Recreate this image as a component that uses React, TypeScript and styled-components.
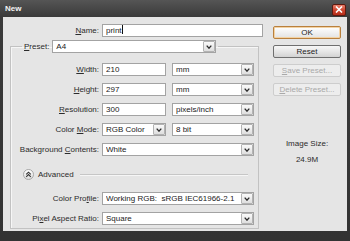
import React from "react";
import styled, { createGlobalStyle } from "styled-components";

const Global = createGlobalStyle`
  html, body { margin: 0; padding: 0; background: #333; }
  body { font-family: "Liberation Sans", Arial, sans-serif; font-size: 8px; color: #2b2b2b; }
  * { box-sizing: border-box; }
  u { text-decoration-thickness: 1px; text-underline-offset: 1px; }
`;

const Window = styled.div`
  width: 350px;
  height: 241px;
  display: flex;
  flex-direction: column;
  background: linear-gradient(#555 0px, #3a3a3a 17px, #333 100%);
`;

const TitleBar = styled.div`
  height: 17px;
  flex: none;
  display: flex;
  align-items: center;
  justify-content: space-between;
  padding: 0 4px 0 5px;
`;

const Title = styled.span`
  color: #f4f4f4;
  font-weight: bold;
  font-size: 8px;
`;

const CloseBtn = styled.div`
  width: 14px;
  height: 12px;
  margin-top: 2px;
  border-radius: 2px;
  border: 1px solid #5e1a10;
  background: linear-gradient(#e8806b, #cf4630 50%, #b52c19);
  display: flex;
  align-items: center;
  justify-content: center;
`;

const Body = styled.div`
  flex: 1;
  margin: 0 3px 10px 3px;
  background: #e5e5e5;
  display: flex;
  padding: 7px 0 2px 0;
`;

const LeftCol = styled.div`
  width: 260px;
  display: flex;
  flex-direction: column;
`;

const NameRow = styled.div`
  display: grid;
  grid-template-columns: 96px 161px;
  column-gap: 3px;
  align-items: center;
`;

const Label = styled.span`
  text-align: right;
  white-space: nowrap;
`;

const Group = styled.fieldset`
  margin: 3px 0 0 7px;
  padding: 0 4px 2px 0;
  width: 249px;
  flex: 1;
  min-width: 0;
  border: 1px solid #c2c2c2;
  box-shadow: inset 1px 1px 0 #f6f6f6;
`;

const Legend = styled.legend`
  margin-left: 11px;
  padding: 0 2px;
`;

const LegendInner = styled.div`
  display: flex;
  align-items: center;
  gap: 3px;
`;

const Grid = styled.div`
  display: grid;
  grid-template-columns: 88px 152px;
  column-gap: 3px;
  row-gap: 7px;
  align-items: center;
  padding-top: 10px;
`;

const Pair = styled.div`
  display: flex;
  gap: 6px;
`;

const Field = styled.div<{ $w: number }>`
  width: ${(p) => p.$w}px;
  height: 13px;
  background: #fff;
  border: 1px solid #a3a3a3;
  display: flex;
  align-items: center;
  padding-left: 3px;
  white-space: nowrap;
  color: #222;
`;

const FieldText = styled.span`
  flex: 1;
  overflow: hidden;
  line-height: 11px;
`;

const Caret = styled.span`
  display: inline-block;
  width: 1px;
  height: 9px;
  background: #111;
  vertical-align: -1px;
`;

const ArrowBtn = styled.span`
  width: 12px;
  height: 11px;
  flex: none;
  border: 1px solid #b3b3b3;
  border-radius: 1px;
  background: linear-gradient(#fafafa, #dedede);
  display: flex;
  align-items: center;
  justify-content: center;
`;

const AdvancedRow = styled.div`
  grid-column: 1 / -1;
  height: 22px;
  display: flex;
  align-items: center;
  padding-left: 12px;
  padding-right: 6px;
  gap: 4px;
`;

const RoundBtn = styled.span`
  width: 11px;
  height: 11px;
  border-radius: 50%;
  border: 1px solid #a8a8a8;
  background: linear-gradient(#ffffff, #dcdcdc);
  display: flex;
  align-items: center;
  justify-content: center;
`;

const Rule = styled.span`
  flex: 1;
  height: 1px;
  margin-left: 2px;
  background: #c6c6c6;
  box-shadow: 0 1px 0 #f6f6f6;
`;

const RightCol = styled.div`
  width: 68px;
  margin-left: 10px;
  padding-top: 2px;
  display: flex;
  flex-direction: column;
  gap: 6px;
`;

type Variant = "default" | "normal" | "disabled";

const Button = styled.div<{ $variant: Variant }>`
  width: 68px;
  height: 13px;
  display: flex;
  align-items: center;
  justify-content: center;
  border-radius: 2px;
  white-space: nowrap;
  color: ${(p) => (p.$variant === "disabled" ? "#a9a9a9" : "#222")};
  border: 1px solid
    ${(p) =>
      p.$variant === "default" ? "#b9803e" : p.$variant === "normal" ? "#6f6f6f" : "#cdcdcd"};
  background: ${(p) =>
    p.$variant === "default"
      ? "linear-gradient(#ffffff, #f1f1f1 50%, #e2e2e2)"
      : p.$variant === "normal"
      ? "linear-gradient(#f7f7f7, #e6e6e6 50%, #d3d3d3)"
      : "#ededed"};
  box-shadow: ${(p) => (p.$variant === "default" ? "inset 0 0 0 1px #f3d3a4" : "none")};
`;

const SizeInfo = styled.div`
  margin-top: 37px;
  display: flex;
  flex-direction: column;
  align-items: center;
  gap: 7px;
  color: #2b2b2b;
`;

const Chevron = () => (
  <svg width="6" height="4" viewBox="0 0 6 4">
    <path d="M0.7 0.6 L3 3.2 L5.3 0.6" fill="none" stroke="#2a2a2a" strokeWidth="1.3" />
  </svg>
);

const Select = ({ w, children }: { w: number; children?: React.ReactNode }) => (
  <Field $w={w}>
    <FieldText>{children}</FieldText>
    <ArrowBtn>
      <Chevron />
    </ArrowBtn>
  </Field>
);

const Input = ({ w, children }: { w: number; children?: React.ReactNode }) => (
  <Field $w={w}>
    <FieldText>{children}</FieldText>
  </Field>
);

export default function App() {
  return (
    <>
      <Global />
      <Window>
        <TitleBar>
          <Title>New</Title>
          <CloseBtn>
            <svg width="8" height="7" viewBox="0 0 8 7">
              <path d="M1 0.5 L7 6.5 M7 0.5 L1 6.5" stroke="#fff" strokeWidth="1.6" />
            </svg>
          </CloseBtn>
        </TitleBar>
        <Body>
          <LeftCol>
            <NameRow>
              <Label>
                <u>N</u>ame:
              </Label>
              <Input w={161}>
                print<Caret />
              </Input>
            </NameRow>
            <Group>
              <Legend>
                <LegendInner>
                  <Label>
                    <u>P</u>reset:
                  </Label>
                  <Select w={164}>A4</Select>
                </LegendInner>
              </Legend>
              <Grid>
                <Label>
                  <u>W</u>idth:
                </Label>
                <Pair>
                  <Input w={64}>210</Input>
                  <Select w={82}>mm</Select>
                </Pair>
                <Label>
                  <u>H</u>eight:
                </Label>
                <Pair>
                  <Input w={64}>297</Input>
                  <Select w={82}>mm</Select>
                </Pair>
                <Label>
                  <u>R</u>esolution:
                </Label>
                <Pair>
                  <Input w={64}>300</Input>
                  <Select w={82}>pixels/inch</Select>
                </Pair>
                <Label>
                  Color <u>M</u>ode:
                </Label>
                <Pair>
                  <Select w={64}>RGB Color</Select>
                  <Select w={82}>8 bit</Select>
                </Pair>
                <Label>
                  Background <u>C</u>ontents:
                </Label>
                <Select w={152}>White</Select>
                <AdvancedRow>
                  <RoundBtn>
                    <svg width="7" height="7" viewBox="0 0 7 7">
                      <path
                        d="M1.2 3.4 L3.5 1.2 L5.8 3.4 M1.2 5.8 L3.5 3.6 L5.8 5.8"
                        fill="none"
                        stroke="#333"
                        strokeWidth="1.1"
                      />
                    </svg>
                  </RoundBtn>
                  <span>Advanced</span>
                  <Rule />
                </AdvancedRow>
                <Label>
                  Color Pro<u>f</u>ile:
                </Label>
                <Select w={152}>Working RGB:&nbsp; sRGB IEC61966-2.1</Select>
                <Label>
                  Pi<u>x</u>el Aspect Ratio:
                </Label>
                <Select w={152}>Square</Select>
              </Grid>
            </Group>
          </LeftCol>
          <RightCol>
            <Button $variant="default">OK</Button>
            <Button $variant="normal">Reset</Button>
            <Button $variant="disabled">
              <u>S</u>ave Preset...
            </Button>
            <Button $variant="disabled">
              <u>D</u>elete Preset...
            </Button>
            <SizeInfo>
              <span>Image Size:</span>
              <span>24.9M</span>
            </SizeInfo>
          </RightCol>
        </Body>
      </Window>
    </>
  );
}
